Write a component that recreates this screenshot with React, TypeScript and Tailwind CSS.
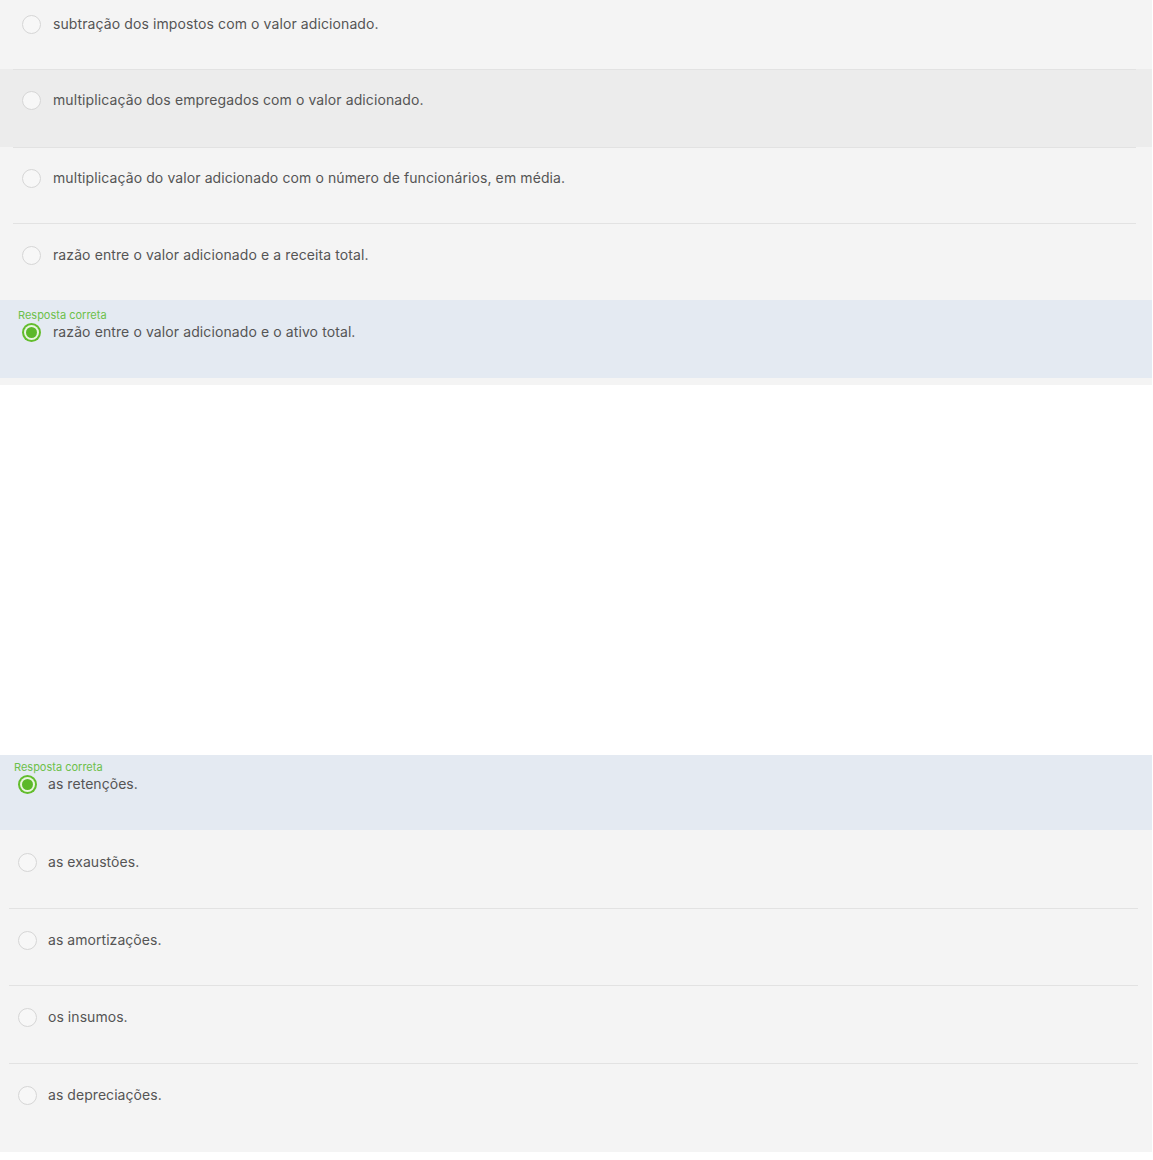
const font = { fontFamily: "Inter, 'Noto Sans', sans-serif" };

type Opt = { text: string; h: number; pt: number; hover?: boolean; correct?: boolean; border?: boolean };

const top: Opt[] = [
  { text: "subtração dos impostos com o valor adicionado.", h: 69, pt: 14 },
  { text: "multiplicação dos empregados com o valor adicionado.", h: 78, pt: 20, hover: true, border: true },
  { text: "multiplicação do valor adicionado com o número de funcionários, em média.", h: 76, pt: 20, border: true },
  { text: "razão entre o valor adicionado e a receita total.", h: 77, pt: 21, border: true },
  { text: "razão entre o valor adicionado e o ativo total.", h: 78, pt: 8, correct: true },
];

const bottom: Opt[] = [
  { text: "as retenções.", h: 75, pt: 5, correct: true },
  { text: "as exaustões.", h: 78, pt: 22 },
  { text: "as amortizações.", h: 77, pt: 21, border: true },
  { text: "os insumos.", h: 78, pt: 21, border: true },
  { text: "as depreciações.", h: 89, pt: 21, border: true },
];

function Radio({ checked }: { checked?: boolean }) {
  if (checked) {
    return (
      <span className="flex h-[19px] w-[19px] shrink-0 items-center justify-center rounded-full bg-[#62bd2c]">
        <span className="flex h-[15px] w-[15px] items-center justify-center rounded-full bg-[#e9f5e0]">
          <span className="h-[11px] w-[11px] rounded-full bg-[#5cb82a]" />
        </span>
      </span>
    );
  }
  return <span className="h-[19px] w-[19px] shrink-0 rounded-full border border-[#d6d6d6] bg-[#f7f7f7]" />;
}

function Row({ o, ml, mr, indent, gap, track }: { o: Opt; ml: string; mr: string; indent: string; gap: string; track: string }) {
  const bg = o.correct ? "bg-[#e4eaf2]" : o.hover ? "bg-[#ececec]" : "bg-[#f4f4f4]";
  return (
    <div className={`relative ${bg}`} style={{ height: o.h }}>
      {o.border && <div className={`absolute top-0 h-px bg-[#e2e2e2] ${ml} ${mr}`} />}
      <div className={`flex flex-col ${indent}`} style={{ paddingTop: o.pt + (o.border ? 1 : 0) }}>
        {o.correct && (
          <div className="-ml-[4px] text-[11px] leading-[14px] text-[#6cc04a]">Resposta correta</div>
        )}
        <div className={`flex items-center ${gap}`}>
          <Radio checked={o.correct} />
          <span className={`text-[14px] leading-[20px] text-[#555] ${track}`}>{o.text}</span>
        </div>
      </div>
    </div>
  );
}

export default function App() {
  return (
    <div className="w-[1152px] bg-white" style={font}>
      <div className="bg-[#f4f4f4] pb-[7px]">
        {top.map((o) => (
          <Row key={o.text} o={o} ml="left-[13px]" mr="right-[16px]" indent="pl-[22px]" gap="gap-[12px]" track="tracking-[0.1px]" />
        ))}
      </div>
      <div className="h-[370px]" />
      <div>
        {bottom.map((o) => (
          <Row key={o.text} o={o} ml="left-[9px]" mr="right-[14px]" indent="pl-[18px]" gap="gap-[11px]" track="tracking-[0.05px]" />
        ))}
      </div>
    </div>
  );
}
